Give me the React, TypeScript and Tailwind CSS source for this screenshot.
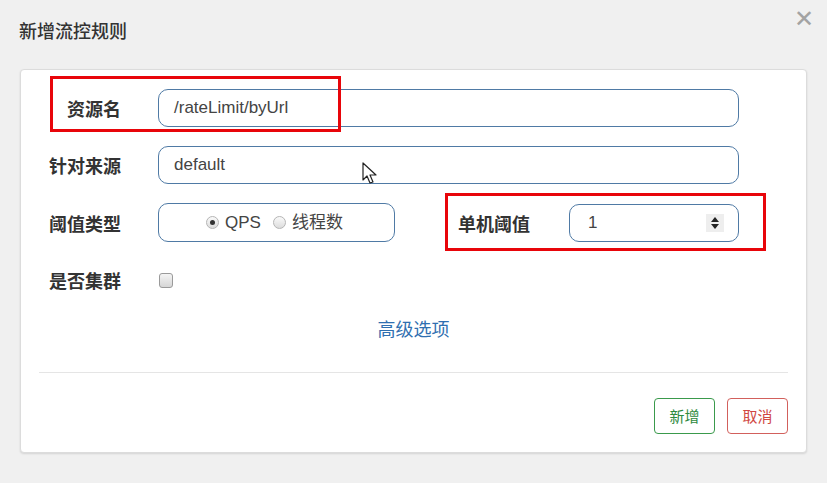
import type { ReactNode } from "react";

const cjk = "font-['Microsoft_YaHei','Noto_Sans_CJK_SC',sans-serif]";
const latin = "font-['Liberation_Sans','Noto_Sans_CJK_SC',sans-serif]";

function Label({ children, className = "" }: { children: ReactNode; className?: string }) {
  return (
    <label className={`${cjk} text-[18px] font-bold leading-none text-[#333] ${className}`}>
      {children}
    </label>
  );
}

function Radio({ checked, label }: { checked?: boolean; label: string }) {
  return (
    <span className="flex items-center gap-[6px]">
      <span className="flex h-[13px] w-[13px] items-center justify-center rounded-full border border-[#b5b5b5] bg-gradient-to-b from-[#fafafa] to-[#dcdcdc]">
        {checked && <span className="h-[5px] w-[5px] rounded-full bg-[#333]" />}
      </span>
      <span className={`${latin} text-[17px] leading-none text-[#444]`}>{label}</span>
    </span>
  );
}

export default function App() {
  return (
    <div className="relative h-[483px] w-[827px] overflow-hidden bg-[#f0f0f0]">
      <header className="flex h-[69px] items-center justify-between pl-[19px] pr-[13px] pb-[8px]">
        <h1 className={`${cjk} text-[18px] font-medium text-[#333]`}>新增流控规则</h1>
        <button type="button" className={`${latin} -mt-[24px] text-[24px] font-normal leading-none text-[#a3a3a3]`}>
          ✕
        </button>
      </header>

      <section className="mx-[20px] w-[787px] rounded-[4px] border border-[#dcdcdc] bg-white px-[18px] pb-[18px] pt-[19px] shadow-[0_1px_2px_rgba(0,0,0,0.12)]">
        <div className="flex flex-col gap-[19px]">
          <div className="flex items-center">
            <Label className="w-[82px] text-right">资源名</Label>
            <div className={`${latin} ml-[37px] flex h-[38px] w-[581px] items-center rounded-[10px] border border-[#4f7aa5] px-[15px] text-[17px] text-[#444]`}>
              /rateLimit/byUrl
            </div>
          </div>

          <div className="flex items-center">
            <Label className="w-[82px] text-right">针对来源</Label>
            <div className={`${latin} ml-[37px] flex h-[38px] w-[581px] items-center rounded-[10px] border border-[#4f7aa5] px-[15px] text-[17px] text-[#444]`}>
              default
            </div>
          </div>

          <div className="flex items-center">
            <Label className="w-[82px] text-right">阈值类型</Label>
            <div className="ml-[37px] flex h-[39px] w-[237px] items-center justify-center gap-[12px] rounded-[10px] border border-[#4f7aa5] pr-[4px]">
              <Radio checked label="QPS" />
              <Radio label="线程数" />
            </div>
            <Label className="ml-[63px] w-[75px]">单机阈值</Label>
            <div className={`${latin} ml-[36px] flex h-[38px] w-[170px] items-center justify-between rounded-[10px] border border-[#4f7aa5] pl-[18px] pr-[14px] text-[17px] text-[#444]`}>
              <span>1</span>
              <span className="flex h-[18px] w-[18px] flex-col items-center justify-center gap-[2px] bg-[#eeeeee]">
                <span className="h-0 w-0 border-x-[4px] border-b-[5px] border-x-transparent border-b-[#222]" />
                <span className="h-0 w-0 border-x-[4px] border-t-[5px] border-x-transparent border-t-[#222]" />
              </span>
            </div>
          </div>

          <div className="flex h-[38px] items-center">
            <Label className="w-[82px] text-right">是否集群</Label>
            <span className="ml-[38px] h-[15px] w-[14px] rounded-[3px] border border-[#9a9a9a] bg-gradient-to-b from-[#f4f4f4] to-[#d6d6d6]" />
          </div>
        </div>

        <div className={`${cjk} mt-[19px] text-center text-[18px] leading-[20px] text-[#2f6fb0]`}>高级选项</div>

        <div className="mt-[34px] border-t border-[#e5e5e5]" />

        <div className="mt-[25px] flex justify-end gap-[12px]">
          <button type="button" className={`${cjk} h-[36px] w-[61px] rounded-[4px] border border-[#3a9a4c] text-[15px] text-[#2e8a3e]`}>
            新增
          </button>
          <button type="button" className={`${cjk} h-[36px] w-[61px] rounded-[4px] border border-[#d2605c] text-[15px] text-[#d04843]`}>
            取消
          </button>
        </div>
      </section>

      {/* red annotation boxes */}
      <div className="pointer-events-none absolute left-[50px] top-[76px] h-[56px] w-[291px] border-[3px] border-[#e8050a]" />
      <div className="pointer-events-none absolute left-[445px] top-[193px] h-[58px] w-[321px] border-[3px] border-[#e8050a]" />

      {/* mouse cursor */}
      <svg className="pointer-events-none absolute left-[362px] top-[162px]" width="18" height="24" viewBox="0 0 18 24">
        <path d="M1 1 L1 18 L5 14 L8 21 L11 20 L8 13 L14 13 Z" fill="#fff" stroke="#222" strokeWidth="1.2" strokeLinejoin="round" />
      </svg>
    </div>
  );
}
